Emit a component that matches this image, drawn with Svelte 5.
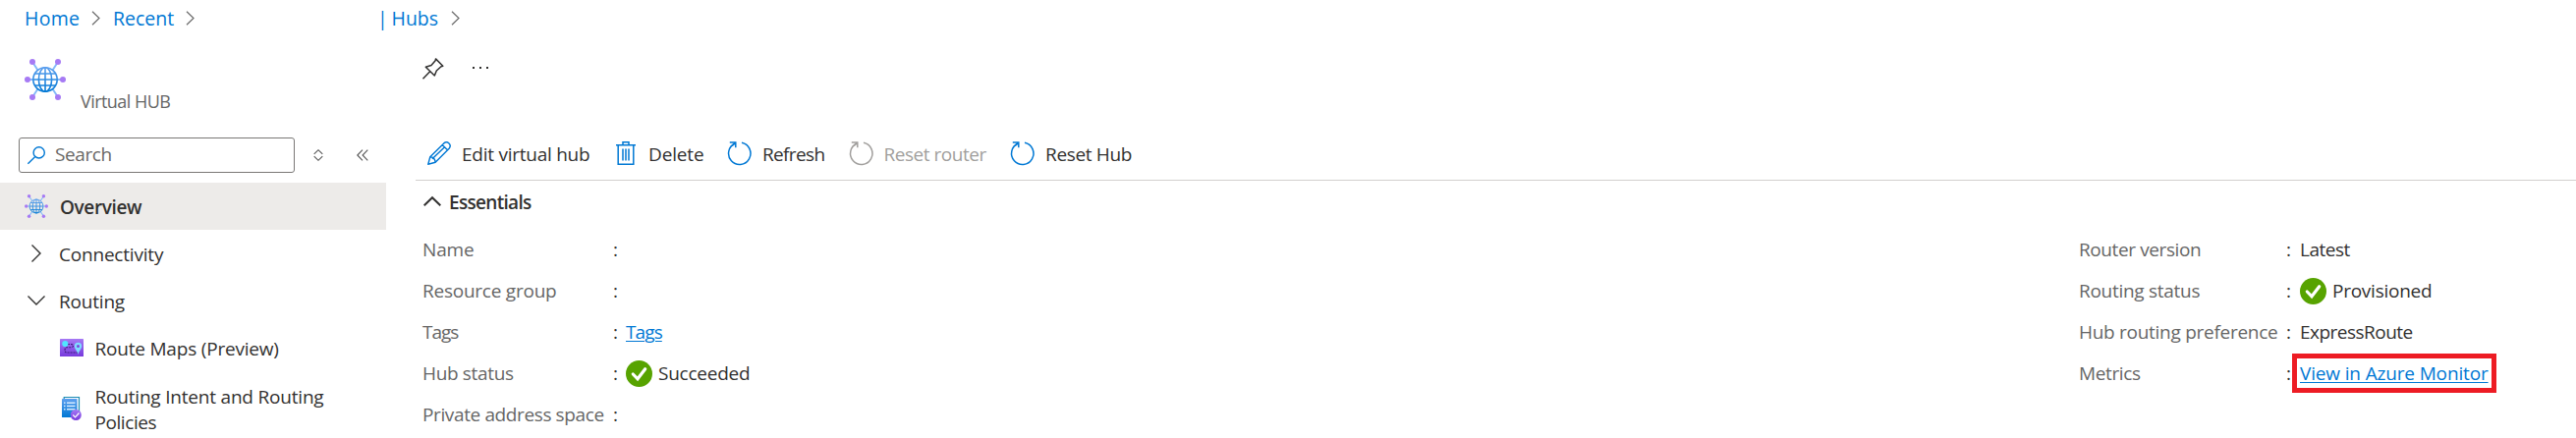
<script>
  const leftFields = [
    { label: 'Name', t: -0.15 },
    { label: 'Resource group', t: -0.24 },
    { label: 'Tags', t: -1, value: 'Tags', vt: -0.9, link: true },
    { label: 'Hub status', t: -0.34, value: 'Succeeded', vt: -0.24, ok: true },
    { label: 'Private address space', t: -0.38 }
  ];
  const rightFields = [
    { label: 'Router version', t: -0.4, value: 'Latest', vt: -0.5 },
    { label: 'Routing status', t: -0.28, value: 'Provisioned', vt: -0.25, ok: true },
    { label: 'Hub routing preference', t: -0.28, value: 'ExpressRoute', vt: -0.52 },
    { label: 'Metrics', t: -0.37, value: 'View in Azure Monitor', vt: -0.15, link: true, marked: true }
  ];
</script>

{#snippet hub(size)}
  <svg width={size} height={size} viewBox="0 0 42 42" fill="none">
    <defs>
      <linearGradient id="globe{size}" x1="0" y1="8" x2="0" y2="34" gradientUnits="userSpaceOnUse">
        <stop offset="0" stop-color="#5ea0ef" /><stop offset="1" stop-color="#0078d4" />
      </linearGradient>
    </defs>
    <path d="M8 3 13.5 11.5M34 3 28.500 11.500M3 21H8M34 21H39M8 39 13.500 30.500M34 39 28.500 30.500" stroke="#83b9f9" stroke-width="1.900" />
    <g stroke="url(#globe{size})" stroke-width="1.600">
      <circle cx="21" cy="21" r="12.200" />
      <ellipse cx="21" cy="21" rx="6.600" ry="12.200" />
      <path d="M20.990 9 21.010 33M10.500 15 31.500 15.010M9 21 33 21.010M10.500 27 31.500 27.010" />
    </g>
    <g fill="#a67af4">
      <circle cx="8" cy="3" r="3" /><circle cx="34" cy="3" r="3" />
      <circle cx="3" cy="21" r="3" /><circle cx="39" cy="21" r="3" />
      <circle cx="8" cy="39" r="3" /><circle cx="34" cy="39" r="3" />
    </g>
  </svg>
{/snippet}

{#snippet crumbArrow()}
  <svg class="arrow" width="9" height="15" viewBox="0 0 9 15"><path d="M1 .8 8 7.500 1 14.200" fill="none" stroke="#6b6b6b" stroke-width="1.200" /></svg>
{/snippet}

{#snippet reload(color)}
  <svg width="24" height="24" viewBox="0 0 24 24" fill="none" stroke={color} stroke-width="1.500">
    <path d="M15 1.300A11.200 11.200 0 1 1 8.300 2" />
    <path d="M2.800 1H8.800V6.200M8.500 1.200 5.300 4.400" />
  </svg>
{/snippet}

{#snippet field(f)}
  <div class="field">
    <span class="label" style:letter-spacing="{f.t}px">{f.label}</span>
    <span class="colon">:</span>
    {#if f.ok}
      <svg class="ok" width="27" height="27" viewBox="0 0 27 27">
        <circle cx="13.500" cy="13.500" r="13.500" fill="#57a300" />
        <path d="M7.300 14 12 18.800 19.700 8.700" fill="none" stroke="#fff" stroke-width="3.200" stroke-linecap="round" />
      </svg>
    {/if}
    {#if f.value}
      <span class="value" class:link={f.link} class:marked={f.marked} style:letter-spacing="{f.vt}px">{f.value}</span>
    {/if}
  </div>
{/snippet}

<div class="page">
  <nav class="crumbs">
    <a class="home">Home</a>{@render crumbArrow()}
    <a class="recent">Recent</a>{@render crumbArrow()}
    <a class="bar">|</a><a class="hubs">Hubs</a>{@render crumbArrow()}
  </nav>

  <div class="body">
    <aside>
      <div class="title">
        {@render hub(42)}
        <span>Virtual HUB</span>
      </div>
      <div class="tools">
        <div class="search">
          <svg width="18" height="18" viewBox="0 0 18 18" fill="none" stroke="#0078d4" stroke-width="1.400">
            <circle cx="11.700" cy="6.400" r="5.600" /><path d="M7.800 10.400.400 17.700" />
          </svg>
          <span>Search</span>
        </div>
        <svg class="sort" width="10" height="12" viewBox="0 0 10 12" fill="none" stroke="#555" stroke-width="1.100"><path d="M.700 4.800 5 .700 9.300 4.800M.700 7.200 5 11.300 9.300 7.200" /></svg>
        <svg class="fold" width="12" height="12" viewBox="0 0 12 12" fill="none" stroke="#555" stroke-width="1.100"><path d="M6 .700.800 6 6 11.300M11.300.700 6.100 6 11.300 11.300" /></svg>
      </div>

      <div class="item current">
        <span class="slot">{@render hub(24)}</span>
        <span class="name overview">Overview</span>
      </div>
      <div class="item">
        <span class="slot"><svg width="18" height="18" viewBox="0 0 18 18"><path d="M4.500.500 13 9 4.500 17.500" fill="none" stroke="#323130" stroke-width="1.400" /></svg></span>
        <span class="name">Connectivity</span>
      </div>
      <div class="item">
        <span class="slot"><svg width="18" height="18" viewBox="0 0 18 18"><path d="M.500 4.500 9 13 17.500 4.500" fill="none" stroke="#323130" stroke-width="1.400" /></svg></span>
        <span class="name">Routing</span>
      </div>
      <div class="item sub">
        <svg width="24" height="18" viewBox="0 0 24 18">
          <defs><linearGradient id="map" x1="0" y1="0" x2="0" y2="1"><stop offset="0" stop-color="#a67af4" /><stop offset="1" stop-color="#773adc" /></linearGradient></defs>
          <rect width="24" height="18" rx=".5" fill="url(#map)" />
          <path d="M8 5.500H11.500Q13.500 5.500 13.500 7T11.500 8.800H7Q5 9 5 11.500T7 14H18" fill="none" stroke="#3b1a7a" stroke-width="1.100" stroke-dasharray="2 1" />
          <circle cx="5.300" cy="5" r="3.100" fill="#50e6ff" />
          <path d="M18.500 16C17.800 12.500 14.800 10.500 14.800 7.500A3.700 3.700 0 0 1 22.200 7.500C22.200 10.500 19.200 12.500 18.500 16Z" fill="#7fdcff" />
          <circle cx="18.500" cy="7.500" r="1.500" fill="#7b45dc" />
        </svg>
        <span class="name">Route Maps (Preview)</span>
      </div>
      <div class="item sub tall">
        <svg class="policy" width="20" height="24" viewBox="0 0 20 24">
          <defs>
            <linearGradient id="doc" x1="0" y1="0" x2="0" y2="1"><stop offset="0" stop-color="#5ea0ef" /><stop offset="1" stop-color="#0078d4" /></linearGradient>
            <linearGradient id="tick" x1="0" y1="0" x2="0" y2="1"><stop offset="0" stop-color="#a67af4" /><stop offset="1" stop-color="#773adc" /></linearGradient>
          </defs>
          <path d="M2.200 2V.500H17.500V17" fill="none" stroke="#198ab3" stroke-width="1.200" />
          <rect y="2" width="15.500" height="19" rx=".5" fill="url(#doc)" />
          <path d="M2 6.200H3.500M5 6.200H13.500M2 9.500H3.500M5 9.500H13.500M2 12.800H3.500M5 12.800H13.500" stroke="#d8ecff" stroke-width="1.500" />
          <circle cx="14.300" cy="18.500" r="5.500" fill="url(#tick)" />
          <path d="M11.300 18.500 13.500 20.800 17.500 16.500" fill="none" stroke="#fff" stroke-width="1.200" />
        </svg>
        <span class="name">Routing Intent and Routing<br /><i>Policies</i></span>
      </div>
    </aside>

    <main>
      <div class="actions">
        <svg width="22" height="22" viewBox="0 0 22 22" fill="none" stroke="#323130" stroke-width="1.500" stroke-linejoin="round">
          <path d="M13.500.900 20.800 8.200 19 8.700 14.300 13 12.300 18 3.300 9.200 9 7.500 13.100 2.800ZM7.700 13.700.500 21.300" />
        </svg>
        <svg class="more" width="16" height="2" viewBox="0 0 16 2" fill="#323130"><path d="M0 0H2V2H0ZM7 0H9V2H7ZM14 0H16V2H14Z" /></svg>
      </div>

      <div class="toolbar">
        <button class="edit">
          <svg width="24" height="24" viewBox="0 0 24 24" fill="none" stroke="#0078d4" stroke-width="1.400" stroke-linejoin="round">
            <path d="M.800 23.200 2.800 15.800 16.800 1.900Q19.500-.400 22 2T22.100 7.200L8.200 21.200ZM15.200 3.500 20.500 8.800M2.800 15.800Q7.500 16 8.200 21.200M5 17.800 17.800 5.500" />
          </svg><span>Edit virtual hub</span>
        </button>
        <button class="delete">
          <svg width="20" height="24" viewBox="0 0 20 24" fill="none" stroke="#0078d4" stroke-width="1.500">
            <path d="M0 3.800H20M7 3.800V.800H13V3.800M2.200 4V23.200H17.800V4M7 7.500V19.500M10 7.500V19.500M13 7.500V19.500" />
          </svg><span>Delete</span>
        </button>
        <button class="refresh">{@render reload('#0078d4')}<span>Refresh</span></button>
        <button class="router">{@render reload('#a19f9d')}<span>Reset router</span></button>
        <button class="reset">{@render reload('#0078d4')}<span>Reset Hub</span></button>
      </div>

      <div class="essentials">
        <svg width="18" height="10" viewBox="0 0 18 10"><path d="M.700 9.300 9 1.200 17.300 9.300" fill="none" stroke="#323130" stroke-width="2" /></svg>
        <span>Essentials</span>
      </div>

      <div class="grid">
        <div class="left">{#each leftFields as f}{@render field(f)}{/each}</div>
        <div class="right">{#each rightFields as f}{@render field(f)}{/each}</div>
      </div>
    </main>
  </div>
</div>

<style>
  :global(body) { background: #fff; }
  .page {
    width: 2622px; height: 446px; overflow: hidden;
    display: flex; flex-direction: column;
    font: 19px/26px "Open Sans", "Noto Sans", sans-serif;
    color: #323130; background: #fff; white-space: nowrap;
  }
  svg { display: block; flex: none; overflow: visible; }
  .crumbs { height: 37px; box-sizing: border-box; display: flex; align-items: center; padding-left: 25px; font-size: 19.500px; color: #0078d4; }
  .crumbs a { flex: none; }
  .home { width: 68px; letter-spacing: .3px; }
  .recent { width: 74px; margin-left: 13px; }
  .bar { width: 11px; margin-left: 186px; }
  .hubs { width: 60px; margin-left: 3.500px; }
  .body { display: flex; flex: 1; min-height: 0; }
  aside { width: 393px; flex: none; }
  .title { height: 103px; display: flex; align-items: flex-start; padding-left: 25px; }
  .title svg { margin-top: 23px; }
  .title span { margin: 53px 0 0 15px; font-size: 18px; letter-spacing: -.55px; color: #666; }
  .tools { height: 46px; display: flex; align-items: flex-start; padding-left: 19px; }
  .search { width: 281px; height: 36px; box-sizing: border-box; border: 1px solid #7a7876; border-radius: 3px; display: flex; align-items: center; padding-left: 8px; }
  .search span { margin: -2px 0 0 10px; color: #6a6866; letter-spacing: -.4px; }
  .sort { margin: 12px 0 0 19px; }
  .fold { margin: 12px 0 0 34px; }
  .item { height: 48px; display: flex; align-items: center; padding-left: 25px; }
  .current { background: #edebe9; }
  .slot { width: 24px; margin-right: 11px; display: flex; justify-content: center; flex: none; }
  .name { letter-spacing: -.2px; padding-top: 2px; }
  .overview { font-weight: 600; letter-spacing: -.38px; margin-left: 1px; }
  .sub { padding-left: 61px; }
  .sub .name { padding-top: 1px; }
  .sub svg { margin-right: 11.500px; }
  .sub svg.policy { margin: 14px 13.500px 0 2px; }
  .tall { align-items: flex-start; height: 68px; box-sizing: border-box; padding-top: 12px; }
  i { font-style: normal; letter-spacing: -.43px; }
  main { flex: 1; min-width: 0; padding-left: 30px; }
  .actions { height: 93px; display: flex; padding-left: 7px; }
  .actions svg { margin-top: 22px; }
  .actions svg.more { margin: 31px 0 0 29px; }
  .toolbar { height: 54px; box-sizing: border-box; border-bottom: 1px solid #d2d0ce; display: flex; padding-left: 12px; }
  button { font: inherit; color: inherit; background: none; border: 0; padding: 0; height: 52px; display: flex; align-items: center; flex: none; text-align: left; }
  button span { margin-left: 11px; padding-top: 2px; }
  .edit { width: 192px; letter-spacing: -.25px; }
  .delete { width: 113px; letter-spacing: -.14px; }
  .delete span { margin-left: 13px; }
  .refresh { width: 124px; letter-spacing: -.65px; }
  .refresh span { margin-left: 12px; }
  .router { width: 164px; letter-spacing: -.47px; color: #a19f9d; }
  .router span { margin-left: 11.500px; }
  .reset { letter-spacing: -.35px; }
  .reset span { margin-left: 12px; }
  .essentials { height: 49px; box-sizing: border-box; padding: 9px 0 0 8px; display: flex; align-items: flex-start; font-weight: 600; letter-spacing: -.69px; }
  .essentials svg { margin: 7px 8px 0 0; }
  .grid { display: flex; }
  .left { width: 1686px; flex: none; padding-left: 7px; box-sizing: border-box; --label: 194px; }
  .right { padding-left: 7px; --label: 211px; }
  .field { height: 42px; display: flex; align-items: center; }
  .label { width: var(--label); color: #666; flex: none; }
  .colon { width: 13px; flex: none; }
  .right .colon { width: 14px; }
  .ok { margin-right: 6px; }
  .link { color: #0078d4; text-decoration: underline; text-decoration-thickness: 1px; text-underline-offset: 2px; }
  .marked { outline: 5px solid #ed1c24; outline-offset: 2px; padding: 0 1px; margin-left: -1px; }
</style>
